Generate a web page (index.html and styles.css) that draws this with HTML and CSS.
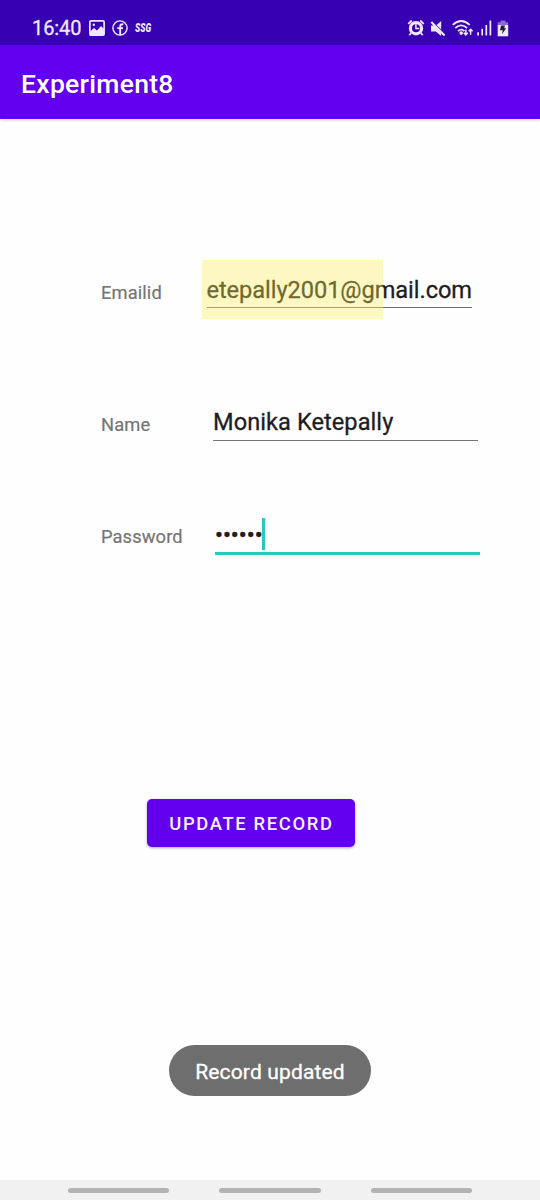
FILE: index.html
```html
<!DOCTYPE html>
<html lang="en">
<head>
<meta charset="utf-8">
<meta name="viewport" content="width=device-width">
<title>Experiment8</title>
<link rel="stylesheet" href="styles.css">
</head>
<body>
<div class="screen">
  <div class="status-bar">
    <div class="status-left">
      <span class="clock">16:40</span>
      <svg class="icon-photo" width="16" height="16" viewBox="0 0 16 16"><rect x=".9" y=".9" width="14.2" height="14.2" rx="1" fill="none" stroke="currentColor" stroke-width="1.7"/><path d="M1 11.5 5 8l3 2.5L12 6l3 3v6H1z" fill="currentColor"/><circle cx="4.8" cy="4.8" r="1.2" fill="currentColor"/></svg>
      <svg class="icon-facebook" width="16" height="16" viewBox="0 0 16 16"><circle cx="8" cy="8" r="7.1" fill="none" stroke="currentColor" stroke-width="1.4"/><path d="M8.2 15V6.5Q8.2 4.3 10.4 4.3H11.3M5.3 8.1H11" fill="none" stroke="currentColor" stroke-width="1.9"/></svg>
      <span class="ssg">SSG</span>
    </div>
    <div class="status-right">
      <svg width="18" height="18" viewBox="0 0 18 18"><path d="M1.2 4.8 4.8 1.5M16.8 4.8 13.2 1.5M4 14 2.3 16.3M14 14l1.7 2.3" stroke="currentColor" stroke-width="1.7" fill="none"/><circle cx="9" cy="9.2" r="5.6" fill="none" stroke="currentColor" stroke-width="3.2"/><path d="M8.9 5.2v4.4h3.4" stroke="currentColor" stroke-width="1.5" fill="none"/></svg>
      <svg class="icon-mute" width="16" height="17" viewBox="0 0 16 17"><path d="M1 5.5h2.8l7.4 7.6v3L5.8 11.6H1zM6.6 4.9 11.2 1v8.6z" fill="currentColor"/><path d="M1.3 1.9 14.6 15.4" stroke="currentColor" stroke-width="2.1"/></svg>
      <svg class="icon-wifi" width="22" height="18" viewBox="0 0 22 18"><g fill="none" stroke="currentColor" stroke-width="1.7"><path d="M.7 5.8Q9.2-1.8 17.7 5.8M3.3 9Q9.2 3.8 15.1 9M6 12.1Q9.2 9.2 12.4 12.1"/><path d="M13.8 10.5v5M11.8 13.8l2 2.1 2-2.1M18.6 15.8v-5M16.7 12.3l1.9-2 2 2" stroke-width="1.5"/></g><circle cx="9.2" cy="14.1" r="1.8" fill="currentColor"/></svg>
      <svg class="icon-signal" width="15" height="16" viewBox="0 0 15 16"><path d="M1.1 12.3v3.2M5.2 8.8v6.7M9.3 5v10.5M13.4 .5v15" stroke="currentColor" stroke-width="1.7"/></svg>
      <svg class="icon-battery" width="12" height="17" viewBox="0 0 12 17"><path d="M3.5 2.3V.6h5v1.7h2.6v3.5H.7V2.3z" fill="#8b69d1"/><path d="M.7 5h10.5v11.3H.7z" fill="currentColor"/><path d="M4 5.5h4L7.2 8.3h2L5 14.2l.8-4H3z" fill="#20202b"/></svg>
    </div>
  </div>
  <header class="app-bar"><h1 class="app-title">Experiment8</h1></header>
  <main class="content">
    <div class="field field-email">
      <span class="label">Emailid</span>
      <div class="input input-email"><span class="value value-email">etepally2001@gmail.com</span><span class="highlight"></span></div>
    </div>
    <div class="field field-name">
      <span class="label">Name</span>
      <div class="input input-name"><span class="value value-name">Monika Ketepally</span></div>
    </div>
    <div class="field field-password">
      <span class="label">Password</span>
      <div class="input input-password"><span class="dots">••••••</span><span class="caret"></span></div>
    </div>
    <button class="update-button" type="button">UPDATE RECORD</button>
    <div class="toast">Record updated</div>
  </main>
  <nav class="nav-bar"><span class="nav-pill"></span><span class="nav-pill"></span><span class="nav-pill"></span></nav>
</div>
</body>
</html>
```
FILE: styles.css
```css
* { box-sizing: border-box; }
body { margin: 0; background: #fefefe; font-family: Roboto, sans-serif; font-weight: 400; -webkit-text-stroke: .3px currentColor; }
.screen { width: 540px; height: 1200px; display: flex; flex-direction: column; overflow: hidden; }
.status-bar { height: 45px; flex: none; display: flex; justify-content: space-between; padding: 9px 31px 0 32px; background: #3700b3; color: #f0e8ff; }
.status-left, .status-right { display: flex; align-items: center; height: 38px; }
.status-left svg, .status-right svg { display: block; flex: none; }
.clock { width: 57px; font-size: 20px; letter-spacing: -.1px; line-height: 38px; }
.icon-facebook { margin-left: 7px; }
.ssg { display: block; margin-left: 7px; font-size: 13px; font-weight: 900; font-style: italic; transform: translateY(-1px) scaleX(.66); transform-origin: left; -webkit-text-stroke: 0; }
.icon-mute { margin-left: 5px; }
.icon-wifi { margin-left: 6px; }
.icon-signal { margin-left: 3px; }
.icon-battery { margin-left: 5px; }
.app-bar { height: 74px; flex: none; background: #6200ee; padding: 0 21px; box-shadow: 0 1px 3px #0003; }
.app-title { margin: 0; font-size: 26.5px; line-height: 78px; font-weight: 500; color: #fff; letter-spacing: .3px; -webkit-text-stroke: 0; }
.content { flex: 1; display: flex; flex-direction: column; padding-top: 141px; }
.field { display: flex; flex: none; padding-left: 101px; }
.field-email { height: 59px; }
.field-name { height: 59px; margin-top: 74px; }
.field-password { height: 59px; margin-top: 53px; }
.label { font-size: 18.3px; line-height: 24px; padding-top: 21px; color: #757575; letter-spacing: .12px; -webkit-text-stroke: .2px; }
.input { position: relative; width: 265px; height: 48px; border-bottom: 1px solid #757575; color: #1d1d1f; font-size: 23.6px; line-height: 30px; white-space: nowrap; letter-spacing: .06px; }
.field-email .label { width: 106px; }
.field-name .label { width: 112px; padding-top: 20px; }
.field-password .label { width: 114px; padding-top: 20px; }
.input-email { display: flex; justify-content: flex-end; padding-top: 15px; letter-spacing: -.05px; }
.highlight { position: absolute; left: -5px; top: 0; width: 181px; height: 59px; background: rgba(252, 237, 86, .36); }
.input-name { padding-top: 14px; }
.input-password { height: 50px; display: flex; border-bottom: 3px solid #27c9bc; }
.dots { width: 47px; padding-top: 15px; font-size: 23.5px; letter-spacing: 0; -webkit-text-stroke: .5px; }
.caret { width: 3px; height: 32px; margin-top: 13px; background: #27c9bc; }
.update-button { flex: none; width: 208px; height: 48px; margin: 235px 0 0 147px; padding: 2px 0 0 1px; border: 0; border-radius: 5px; background: #6200ee; color: #f6efff; font: 500 18.4px/24px Roboto, sans-serif; letter-spacing: 1.64px; box-shadow: 0 1px 3px #0005; -webkit-text-stroke: 0; }
.toast { flex: none; width: 202px; height: 51px; margin: 198px 0 0 169px; border-radius: 26px; background: #6e6e6e; color: #fff; font-size: 21px; line-height: 54px; text-align: center; letter-spacing: .15px; }
.nav-bar { height: 20px; flex: none; display: flex; gap: 50px; padding: 8px 68px 0; background: #f1f1f1; }
.nav-pill { width: 101.5px; height: 4.5px; border-radius: 3px; background: #b4b4b4; }
```
